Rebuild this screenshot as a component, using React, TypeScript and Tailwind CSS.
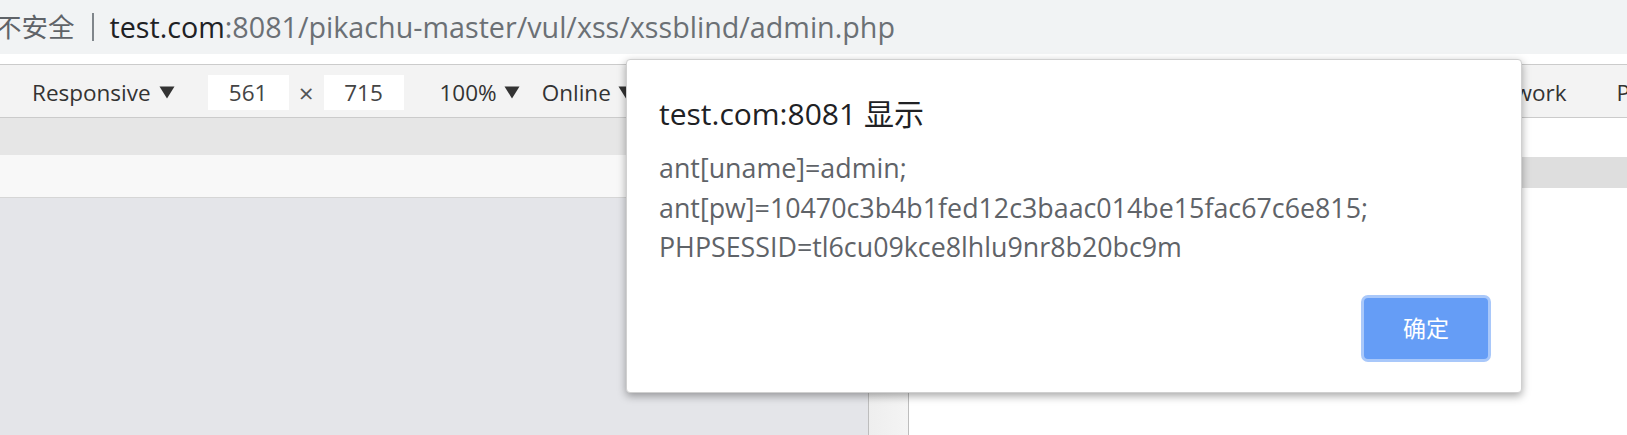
const font = '[font-family:"Open_Sans","Noto_Sans_CJK_SC",sans-serif]'

function Caret({ className }: { className?: string }) {
    return (
        <svg width="16" height="13" viewBox="0 0 16 13" className={className}>
            <path d="M0.5 0.5 L15.5 0.5 L8 12.5 Z" fill="#333" />
        </svg>
    )
}

function AddressBar() {
    return (
        <div className="h-[54px] bg-[#f1f3f4] flex items-center">
            <span className="-ml-[5px] text-[26.5px] text-[#5f6368] leading-none">不安全</span>
            <span className="ml-[17px] w-[2px] h-[28px] bg-[#80868b]" />
            <span className="ml-[16px] text-[28.7px] leading-none">
                <span className="text-[#202124]">test.com</span>
                <span className="text-[#6b7075]">:8081/pikachu-master/vul/xss/xssblind/admin.php</span>
            </span>
        </div>
    )
}

function DeviceToolbar() {
    return (
        <div className="h-[54px] pt-[3px] border-t border-b border-[#cbcbcb] bg-[#f3f3f3] flex items-center text-[22.5px] text-[#333]">
            <span className="ml-[32px]">Responsive</span>
            <Caret className="ml-[8px]" />
            <div className="ml-[33px] w-[81px] h-[35px] bg-white flex items-center justify-center text-[#444]">561</div>
            <span className="ml-[10px] text-[26px] leading-none text-[#555]">×</span>
            <div className="ml-[10px] w-[80px] h-[35px] bg-white flex items-center justify-center text-[#444]">715</div>
            <span className="ml-[36px]">100%</span>
            <Caret className="ml-[7px]" />
            <span className="ml-[22px]">Online</span>
            <Caret className="ml-[7px]" />
        </div>
    )
}

function AlertDialog() {
    return (
        <div className="absolute left-[626px] top-[59px] w-[896px] h-[334px] bg-white rounded-[4px] border border-[#d0d0d0] shadow-[0_3px_9px_rgba(0,0,0,0.35)] flex flex-col">
            <div className="pl-[32px] pt-[34px] text-[30px] leading-[40px] text-[#202124]">test.com:8081 显示</div>
            <div className="pl-[32px] mt-[14px] text-[26.8px] leading-[39.5px] text-[#5f6368]">
                <div>ant[uname]=admin;</div>
                <div>ant[pw]=10470c3b4b1fed12c3baac014be15fac67c6e815;</div>
                <div>PHPSESSID=tl6cu09kce8lhlu9nr8b20bc9m</div>
            </div>
            <div className="mt-auto flex justify-end pr-[30px] pb-[30px]">
                <button className="w-[130px] h-[67px] rounded-[7px] border-[3px] border-[#a9c8fa] bg-[#659df6] text-white text-[23px] flex items-center justify-center">
                    确定
                </button>
            </div>
        </div>
    )
}

export default function App() {
    return (
        <div className={`w-[1627px] h-[435px] relative overflow-hidden bg-white ${font}`}>
            <AddressBar />
            <div className="h-[10px] bg-white" />
            <div className="flex h-[371px]">
                {/* device mode side */}
                <div className="w-[868px] shrink-0 flex flex-col">
                    <DeviceToolbar />
                    <div className="h-[37px] bg-[#e6e6e6]" />
                    <div className="h-[43px] bg-[#f8f8f8] border-b border-[#d6d6d6]" />
                    <div className="flex-1 bg-[#e4e5e9]" />
                </div>
                <div className="w-[41px] shrink-0 flex flex-col">
                    <div className="h-[54px] border-t border-b border-[#cbcbcb] bg-[#f3f3f3]" />
                    <div className="flex-1 border-l border-r border-[#bdbdbd] bg-gradient-to-r from-[#eeeeee] to-[#f4f4f4]" />
                </div>
                {/* devtools panel */}
                <div className="flex-1 min-w-0 flex flex-col">
                    <div className="h-[54px] pt-[3px] border-t border-b border-[#cbcbcb] bg-[#f3f3f3] flex items-center text-[22.5px] text-[#333] whitespace-nowrap">
                        <span className="ml-[568px]">Network</span>
                        <span className="ml-[50px]">Performance</span>
                    </div>
                    <div className="h-[39px] bg-white" />
                    <div className="h-[31px] bg-[#dedede]" />
                    <div className="flex-1 bg-white" />
                </div>
            </div>
            <AlertDialog />
        </div>
    )
}
